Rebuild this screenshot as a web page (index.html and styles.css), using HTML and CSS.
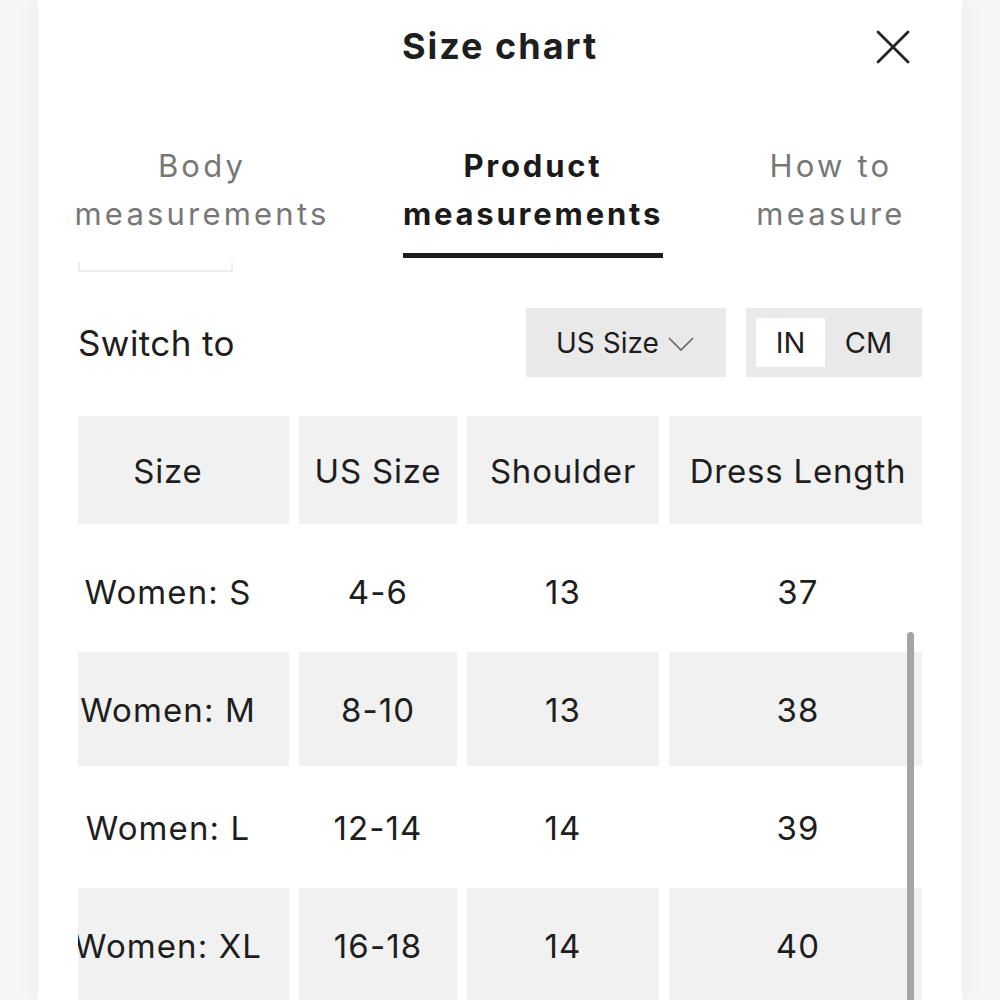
FILE: index.html
```html
<!DOCTYPE html>
<html lang="en">
<head>
<meta charset="utf-8">
<title>Size chart</title>
<link rel="stylesheet" href="styles.css">
</head>
<body>
<div class="page">
  <div class="modal">
    <header class="head">
      <h1 class="title">Size chart</h1>
      <button class="close" aria-label="Close">
        <svg width="34" height="34" viewBox="0 0 34 34"><path d="M2 2 L32 32 M32 2 L2 32" stroke="#222" stroke-width="2.8" fill="none" stroke-linecap="round"/></svg>
      </button>
    </header>

    <nav class="tabs">
      <div class="tab"><span class="tab-label">Body<br>measurements</span></div>
      <div class="tab active"><span class="tab-label">Product<br>measurements</span></div>
      <div class="tab"><span class="tab-label">How to<br>measure</span></div>
    </nav>

    <div class="ghost"></div>

    <div class="switch-row">
      <span class="switch-label">Switch to</span>
      <div class="controls">
        <div class="dropdown">
          <span>US Size</span>
          <svg width="26" height="16" viewBox="0 0 26 16"><path d="M1 2 L13 14 L25 2" stroke="#666" stroke-width="1.6" fill="none"/></svg>
        </div>
        <div class="units">
          <span class="unit active">IN</span>
          <span class="unit">CM</span>
        </div>
      </div>
    </div>

    <div class="table">
      <div class="row head-row">
        <div class="cell c1">Size</div>
        <div class="cell c2">US Size</div>
        <div class="cell c3">Shoulder</div>
        <div class="cell c4">Dress Length</div>
      </div>
      <div class="row">
        <div class="cell c1"><span>Women: S</span></div>
        <div class="cell c2">4-6</div>
        <div class="cell c3">13</div>
        <div class="cell c4">37</div>
      </div>
      <div class="row shaded">
        <div class="cell c1"><span>Women: M</span></div>
        <div class="cell c2">8-10</div>
        <div class="cell c3">13</div>
        <div class="cell c4">38</div>
      </div>
      <div class="row">
        <div class="cell c1"><span>Women: L</span></div>
        <div class="cell c2">12-14</div>
        <div class="cell c3">14</div>
        <div class="cell c4">39</div>
      </div>
      <div class="row shaded">
        <div class="cell c1"><span>Women: XL</span></div>
        <div class="cell c2">16-18</div>
        <div class="cell c3">14</div>
        <div class="cell c4">40</div>
      </div>
    </div>

    <div class="scrollbar"></div>
  </div>
</div>
</body>
</html>
```

FILE: styles.css
```css
* { box-sizing: border-box; }

html, body {
  margin: 0;
  padding: 0;
  height: 100%;
  overflow: hidden;
  background: #f6f6f6;
  font-family: "Inter", "Noto Sans", sans-serif;
  color: #1e1e1e;
}

.page {
  height: 1000px;
  padding: 0 38px;
}

.modal {
  position: relative;
  background: #fff;
  height: 1000px;
  padding: 0 40px;
  box-shadow: 0 0 24px rgba(0, 0, 0, 0.05);
  overflow: hidden;
}

.head {
  position: relative;
  height: 92px;
  display: flex;
  align-items: center;
  justify-content: center;
}

.title {
  margin: 0;
  font-size: 36px;
  font-weight: 700;
  letter-spacing: 2px;
  line-height: 1;
}

.close {
  position: absolute;
  right: 12px;
  top: 30px;
  width: 34px;
  height: 34px;
  padding: 0;
  border: 0;
  background: none;
}

.tabs {
  display: grid;
  grid-template-columns: 328px 334px 262px;
  margin: 50px -40px 0;
}

.tab {
  text-align: center;
  font-size: 31px;
  line-height: 48px;
  color: #777;
  letter-spacing: 3.2px;
}

.tab-label {
  display: inline-block;
  padding-bottom: 15px;
  border-bottom: 5px solid transparent;
}

.tab.active {
  color: #1a1a1a;
  font-weight: 700;
  letter-spacing: 2.8px;
}

.tab.active .tab-label {
  border-bottom-color: #1e1e1e;
}

.ghost {
  width: 155px;
  height: 10px;
  margin-top: 4px;
  border: 2px solid #ececec;
  border-top: 0;
}

.switch-row {
  display: flex;
  align-items: center;
  justify-content: space-between;
  margin-top: 36px;
  height: 69px;
}

.switch-label {
  font-size: 35px;
  letter-spacing: 0.4px;
}

.controls {
  display: flex;
  gap: 20px;
  height: 69px;
}

.dropdown {
  width: 200px;
  background: #e9e9e9;
  display: flex;
  align-items: center;
  gap: 9px;
  padding-left: 30px;
  font-size: 28px;
}

.dropdown svg { margin-top: 2px; }

.units {
  width: 176px;
  background: #e9e9e9;
  padding: 10px;
  display: flex;
  font-size: 29px;
}

.unit {
  display: flex;
  align-items: center;
  justify-content: center;
}

.unit.active {
  width: 69px;
  background: #fff;
}

.unit:not(.active) {
  flex: 1;
}

.table {
  margin-top: 39px;
  overflow: hidden;
}

.row {
  display: grid;
  grid-template-columns: 211px 158px 192px 253px;
  column-gap: 10px;
  height: 114px;
  margin-bottom: 4px;
  font-size: 33px;
  letter-spacing: 1.1px;
}

.head-row {
  height: 108px;
  margin-bottom: 10px;
  letter-spacing: 0.8px;
}

.cell {
  display: flex;
  align-items: center;
  justify-content: center;
  white-space: nowrap;
  padding-top: 2px;
}

.head-row .cell,
.shaded .cell {
  background: #f0f1f0;
}

.c1 { padding-right: 31px; }
.c4 { padding-left: 5px; }

.scrollbar {
  position: absolute;
  left: 869px;
  top: 632px;
  width: 7px;
  height: 400px;
  background: #a4a4a4;
  border-radius: 4px;
}
```
